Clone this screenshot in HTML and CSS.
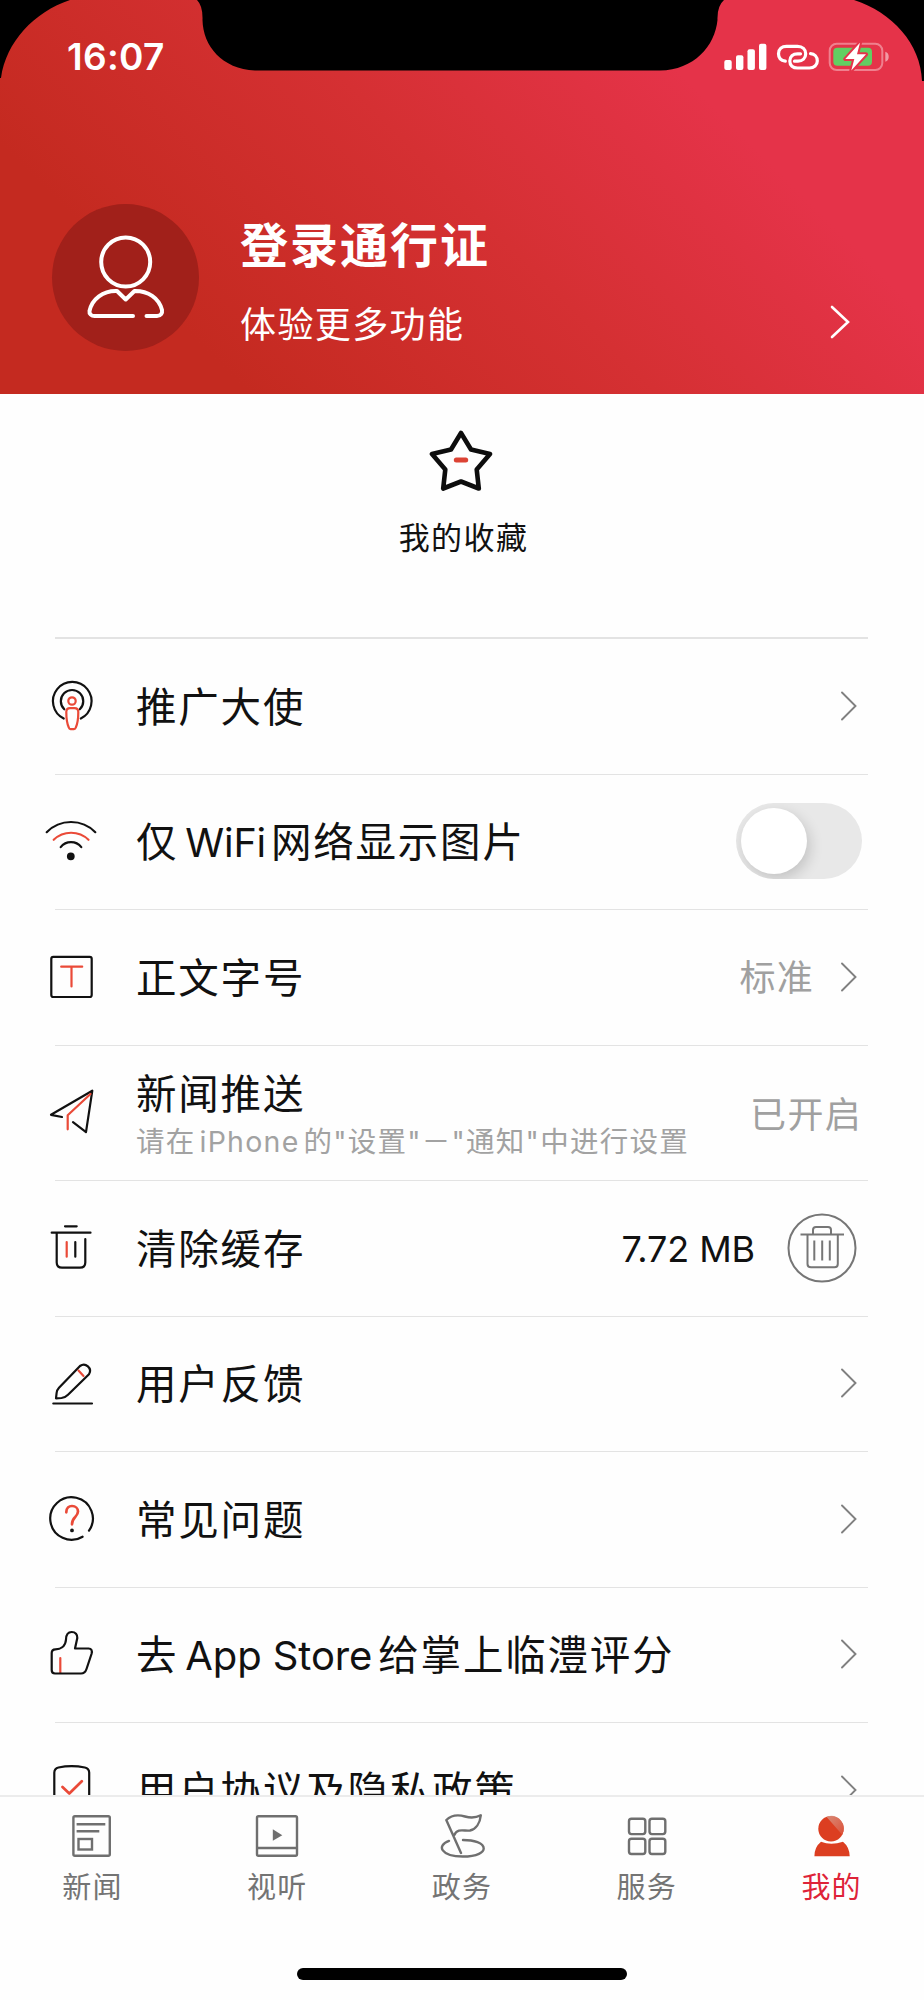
FILE: index.html
```html
<!DOCTYPE html>
<html lang="zh-CN">
<head>
<meta charset="utf-8">
<title>我的</title>
<link rel="stylesheet" href="styles.css">
</head>
<body>
<div class="screen">
  <header class="header">
    <svg class="notch" viewBox="0 0 924 84" aria-hidden="true">
      <path d="M0 0H70C34 12 6 42 1 78H0ZM197 0Q203 6 202.500 20C203 46 222 69 255 70.500H660C694 70 715 46 717.500 20Q717 6 724 0ZM854 0C892 12 921 44 922 81H924V0Z"/>
    </svg>
    <div class="status">
      <span class="clock">16:07</span>
      <svg class="indicators" viewBox="0 0 170 32" width="170" height="32">
        <g fill="#fff">
          <rect x="2.300" y="18" width="7.400" height="10" rx="2"/>
          <rect x="14" y="13.300" width="7.400" height="14.700" rx="2"/>
          <rect x="25.500" y="7.300" width="7.400" height="20.700" rx="2"/>
          <rect x="37" y="1.700" width="7.400" height="26.300" rx="2"/>
        </g>
        <g fill="none" stroke="#fff" stroke-width="3.200" stroke-linecap="round">
          <path d="M63.300 19.200C58.500 18.500 56.500 15.500 56.500 11.800C56.500 7 60 4.300 64.500 4.300H75.500C80.500 4.300 83.700 7.500 83.700 11.800C83.700 16.300 80.500 19.200 76 19.200H72.500"/>
          <path d="M78.500 11.800H75.500C71 11.800 67.800 14.500 67.800 19C67.800 23.500 71 26 75.500 26H87.500C92 26 95.300 23 95.300 19C95.300 14.800 92.500 11.800 88.500 11.600"/>
        </g>
        <rect x="107.700" y="1.700" width="52.600" height="26.300" rx="7" fill="none" stroke="#fff" stroke-opacity=".38" stroke-width="2"/>
        <path d="M163.300 9.800Q166.700 11 166.700 14.800T163.300 19.700Z" fill="#fff" fill-opacity=".5"/>
        <rect x="111.300" y="5.700" width="38.700" height="18" rx="4" fill="#62ce62"/>
        <path d="M138 .7L123.300 17H132.300L129.300 28.500L144 12.300H135Z" fill="#fff" stroke="#e53349" stroke-width="4" paint-order="stroke" stroke-linejoin="round"/>
      </svg>
    </div>
    <div class="profile">
      <div class="avatar">
        <svg viewBox="0 0 148 148" width="148" height="148" fill="none" stroke="#fff" stroke-width="4" stroke-linecap="round" stroke-linejoin="round">
          <circle cx="73.700" cy="58" r="24.500"/>
          <path d="M94.500 112H105C109 112 110.500 109 110 106C107 94 96 86.700 82.500 87L73.700 95.500L65 87C51 86.500 40 95 37.500 107C37 110 39.500 112 42.500 112H81"/>
        </svg>
      </div>
      <div class="login">
        <div class="login-title">登录通行证</div>
        <div class="login-sub">体验更多功能</div>
      </div>
      <svg class="go" viewBox="0 0 20 34" width="20" height="34" fill="none" stroke="#fff" stroke-width="2.600" stroke-linecap="round"><path d="M2 2L18 17L2 32"/></svg>
    </div>
  </header>

  <section class="favorite">
    <svg viewBox="0 0 66 66" width="66" height="66" fill="none" stroke-linecap="round" stroke-linejoin="round">
      <path d="M33 8L43 24.500L62 29L48.700 44.500L50.800 63.500L33 56.500L15.200 63.500L17.300 44.500L4 29L23 24.500Z" stroke="#0d0d0d" stroke-width="4.600"/>
      <path d="M28.300 35H37.700" stroke="#dc4334" stroke-width="5"/>
    </svg>
    <span>我的收藏</span>
  </section>

  <main class="list">
    <div class="row first">
      <svg class="icon" viewBox="0 0 56 56"><path d="M20.700 40.500A19.300 19.300 0 1 1 37.800 40.500M21.300 31.300A11.200 11.200 0 1 1 36.800 31.300"/><g class="red"><circle cx="29" cy="23" r="3.700"/><path d="M23.300 34Q23.300 30.200 27 30.200H31.500Q35.300 30.200 35.300 34Q35.300 44 32.800 49.500Q32.300 51.200 31 51.200H27.500Q26.300 51.200 25.800 49.500Q23.300 44 23.300 34Z"/></g></svg>
      <span class="label">推广大使</span>
      <svg class="chevron" viewBox="0 0 16 30"><path d="M1 1.500L14.500 15L1 28.500"/></svg>
    </div>
    <div class="row">
      <svg class="icon" viewBox="0 0 56 56"><path d="M3.700 19.200A34 34 0 0 1 52.300 19.200M17.700 34.200A13 13 0 0 1 38.300 34.200"/><path class="red" d="M10.700 26.800A25 25 0 0 1 45.500 26.800"/><circle cx="27.800" cy="43.300" r="2.800" fill="#111"/></svg>
      <span class="label">仅<span class="latin">WiFi</span>网络显示图片</span>
      <span class="toggle"><span class="knob"></span></span>
    </div>
    <div class="row">
      <svg class="icon" viewBox="0 0 56 56"><rect x="8.300" y="7.800" width="40.400" height="40.200" rx="2"/><path class="red" d="M18.200 17.700H39.200M28.500 17.700V37.500"/></svg>
      <span class="label">正文字号</span>
      <span class="value">标准</span>
      <svg class="chevron" viewBox="0 0 16 30"><path d="M1 1.500L14.500 15L1 28.500"/></svg>
    </div>
    <div class="row">
      <svg class="icon" viewBox="0 0 56 56"><path d="M19 33L8 30.800L49.300 6.700L43 48.200L30 38.200"/><path class="red" d="M47.500 10L24.700 31.200V45.300"/></svg>
      <div class="stack">
        <span class="label">新闻推送</span>
        <span class="hint">请在<span class="hint-latin">iPhone</span>的"设置"<span class="dash">－</span>"通知"中进行设置</span>
      </div>
      <span class="value last">已开启</span>
    </div>
    <div class="row">
      <svg class="icon" viewBox="0 0 56 56"><path d="M22 6.300H33.700M8.700 12.700H47.500M13.700 12.700V42.500Q13.700 47.700 19 47.700H37Q42.300 47.700 42.300 42.500V19M32.300 22V36.700"/><path class="red" d="M23.700 22V36.700"/></svg>
      <span class="label">清除缓存</span>
      <span class="size">7.72 MB</span>
      <svg class="trash" viewBox="0 0 70 70"><circle cx="35" cy="35" r="33.500"/><path d="M13.500 21.500H57M26 21.500V17Q26 14 29 14H41Q44 14 44 17V21.500M20.500 21.500V51Q20.500 54.300 24 54.300H47.500Q50.800 54.300 50.800 51V21.500M27.300 27.500V47.500M35.200 27.500V47.500M42.800 27.500V47.500"/></svg>
    </div>
    <div class="row">
      <svg class="icon" viewBox="0 0 56 56"><path d="M10.300 48.500H49M13 43.300L13.600 38Q14 34.800 16 32.700L37 11A6.200 6.200 0 0 1 46 19.200L25 39.700Q22 42.700 18.500 43Z"/><path class="red" d="M35.500 15.500L40.500 21"/></svg>
      <span class="label">用户反馈</span>
      <svg class="chevron" viewBox="0 0 16 30"><path d="M1 1.500L14.500 15L1 28.500"/></svg>
    </div>
    <div class="row">
      <svg class="icon" viewBox="0 0 56 56"><path d="M39.600 45.700A21.300 21.300 0 1 1 46 39.700"/><path class="red thick" d="M23.300 21.300C23.300 17 26 15 29 15C32.500 15 35 17.500 35 20.500C35 23 33.500 24.500 32 26.200C30 28.300 29 29.500 29 33.300"/><circle cx="29" cy="39.400" r=".8" fill="#111"/></svg>
      <span class="label">常见问题</span>
      <svg class="chevron" viewBox="0 0 16 30"><path d="M1 1.500L14.500 15L1 28.500"/></svg>
    </div>
    <div class="row">
      <svg class="icon" viewBox="0 0 56 56"><path class="red" d="M17.300 32V47"/><path d="M12 47.500Q8.700 47.500 8.700 44V27Q8.700 23.300 12.500 23.300C17 23.300 22.500 21 23 13.500C23.100 8.500 25 6 28.700 6C32.500 6 34.500 8.500 34.300 12L32 22.500H45.500Q50 22.800 48.500 28L43.500 43Q42 47.500 38 47.500Z"/></svg>
      <span class="label">去<span class="latin app">App Store</span>给掌上临澧评分</span>
      <svg class="chevron" viewBox="0 0 16 30"><path d="M1 1.500L14.500 15L1 28.500"/></svg>
    </div>
    <div class="row">
      <svg class="icon" viewBox="0 0 56 56"><path d="M11.300 40V10.500Q11.500 6.500 15.500 5.500Q28.500 2.700 41.800 5.500Q46 6.500 46.200 10.500V40Q42 47 28.700 51Q15 47 11.300 40Z"/><path class="red thick" d="M19.500 25L26.300 31.500L38.800 19.300"/></svg>
      <span class="label">用户协议及隐私政策</span>
      <svg class="chevron" viewBox="0 0 16 30"><path d="M1 1.500L14.500 15L1 28.500"/></svg>
    </div>
  </main>

  <nav class="tabs">
    <div class="tab">
      <svg viewBox="0 0 48 48"><rect x="5.400" y="4.300" width="36.400" height="39.500" rx="1.500"/><path d="M8.600 12.300H37.300M8.600 19.300H31.300"/><rect x="10.500" y="27" width="13.500" height="10.500"/></svg>
      <span>新闻</span>
    </div>
    <div class="tab">
      <svg viewBox="0 0 48 48"><rect x="4" y="4.300" width="40" height="39.500" rx="1.500"/><path d="M4 36H44"/><path d="M19.800 17.300L29.300 23.200L19.800 28.800Z" fill="#6f6f6f" stroke="none"/></svg>
      <span>视听</span>
    </div>
    <div class="tab">
      <svg viewBox="0 0 48 48" stroke-linecap="round" stroke-linejoin="round"><path d="M23 41L8.300 8C13 3.500 20 2.500 27 4.500C33 6.200 38 5.800 42.800 3.300C42 11 38 17 32 18.500C27 19.500 19.500 15.500 16.300 23M11 28.900C-2 33.500 3 44.500 24.700 44.500C40 44.500 45.700 40 45.700 36.500C45.700 31 36 28 25 28"/></svg>
      <span>政务</span>
    </div>
    <div class="tab">
      <svg viewBox="0 0 48 48"><rect x="6" y="6.800" width="16.300" height="15.300" rx="2.500"/><rect x="26.500" y="6.800" width="15.800" height="15.300" rx="2.500"/><rect x="6" y="26.700" width="16.300" height="15.300" rx="2.500"/><rect x="26.500" y="26.700" width="15.800" height="15.300" rx="2.500"/></svg>
      <span>服务</span>
    </div>
    <div class="tab active">
      <svg viewBox="0 0 48 48" stroke="none">
        <defs><linearGradient id="shine" x1="0" y1="0" x2="1" y2="1"><stop offset="0" stop-color="#d8a090" stop-opacity=".75"/><stop offset="1" stop-color="#dc5038" stop-opacity=".9"/></linearGradient></defs>
        <circle cx="23" cy="16.700" r="12.700" fill="#dc3e21"/>
        <path d="M18.500 4.800A12.700 12.700 0 0 1 34.200 22.700Z" fill="url(#shine)"/>
        <path d="M6.400 44.200Q6.400 35 13 29.700Q23 33.800 35 29.700Q41.500 35 41.700 44.200Z" fill="#dc3e21"/>
      </svg>
      <span>我的</span>
    </div>
  </nav>
  <div class="home-area"><div class="home-bar"></div></div>
</div>
</body>
</html>
```
FILE: styles.css
```css
* { box-sizing: border-box; }
body {
  margin: 0;
  background: #fff;
  font-family: Inter, "Noto Sans CJK SC", sans-serif;
  color: #111;
}
.screen {
  width: 924px;
  height: 2000px;
  display: flex;
  flex-direction: column;
  overflow: hidden;
  background: #fefefe;
}
svg { display: block; flex: none; }

.header {
  position: relative;
  flex: none;
  height: 394px;
  background: linear-gradient(45deg, #c42a20 19%, #d53033 50%, #e53349 76%);
  color: #fff;
}
.notch { position: absolute; left: 0; top: 0; width: 924px; height: 84px; }
.status {
  display: flex;
  justify-content: space-between;
  align-items: center;
  height: 116px;
  padding: 0 32px 0 67px;
}
.clock { font-size: 37px; font-weight: 600; letter-spacing: .3px; line-height: 44px; margin-top: -2px; }
.profile {
  display: flex;
  align-items: flex-start;
  padding: 88px 74px 0 52px;
}
.avatar { width: 147px; height: 147px; border-radius: 50%; background: #a1201a; }
.login { margin-left: 41px; flex: 1; }
.login-title { font-size: 48px; line-height: 60px; font-weight: 600; letter-spacing: 2px; margin-top: 12px; }
.login-sub { font-size: 36px; line-height: 50px; font-weight: 400; letter-spacing: 1.400px; margin-top: 24px; }
.go { margin-top: 101px; }

.favorite {
  flex: none;
  height: 243px;
  padding-top: 31px;
  display: flex;
  flex-direction: column;
  align-items: center;
}
.favorite svg { margin-right: 2px; }
.favorite span { margin-top: 24px; padding-left: 3px; font-size: 31px; line-height: 46px; letter-spacing: 1.400px; }

.list { flex: none; height: 1158px; padding: 1px 56px 0 43px; overflow: hidden; }
.row {
  position: relative;
  display: flex;
  align-items: center;
  height: 135.500px;
  padding-right: 11px;
}
.row::before {
  content: "";
  position: absolute;
  left: 12px; right: 0; top: 0;
  height: 1px;
  background: #e3e3e3;
}
.row.first::before { height: 2px; top: -1px; }
.icon {
  width: 56px; height: 56px;
  margin-right: 37px;
  fill: none; stroke: #111; stroke-width: 2.200;
  stroke-linecap: round; stroke-linejoin: round;
}
.icon .red { stroke: #ea4a38; }
.icon .thick { stroke-width: 2.700; }
.label { flex: 1; font-size: 40.500px; line-height: 52px; letter-spacing: 1.800px; white-space: nowrap; padding-top: 4px; }
.latin { font-size: 39.500px; letter-spacing: -.2px; margin: 0 5px 0 7px; }
.latin.app { font-size: 40px; letter-spacing: -.1px; margin: 0 6px 0 7px; }
.chevron { width: 16px; height: 30px; fill: none; stroke: #808080; stroke-width: 1.900; stroke-linecap: round; }
.toggle {
  width: 126px; height: 76px;
  margin-right: -5px;
  border-radius: 38px;
  background: #e8e8e8;
  padding: 5px;
  overflow: hidden;
}
.knob { display: block; width: 66px; height: 66px; border-radius: 50%; background: #fff; box-shadow: 3px 5px 14px rgba(0,0,0,.16); }
.value { font-size: 36px; line-height: 48px; letter-spacing: 1.300px; color: #a0a0a0; margin: 2px 27px 0 0; }
.value.last { margin: 5px -5px 0 0; }
.stack { flex: 1; display: flex; flex-direction: column; padding-top: 4px; }
.stack .label { flex: none; line-height: 50px; }
.hint { font-size: 28.500px; line-height: 40px; letter-spacing: 1.250px; color: #a2a2a2; margin-top: 2px; white-space: nowrap; }
.hint-latin { margin: 0 4px; }
.size { font-size: 36px; letter-spacing: -.1px; margin: 3px 32px 0 0; }
.trash { width: 70px; height: 70px; fill: none; stroke: #767676; stroke-width: 2; }

.tabs {
  flex: none;
  display: grid;
  grid-template-columns: repeat(5, 1fr);
  height: 129px;
  border-top: 2px solid #ececec;
  padding-top: 15px;
}
.tab { display: flex; flex-direction: column; align-items: center; color: #747474; font-size: 29px; }
.tab svg { width: 48px; height: 48px; fill: none; stroke: #6f6f6f; stroke-width: 2.400; }
.tab span { line-height: 40px; margin-top: 8px; letter-spacing: 1.200px; }
.tab.active { color: #de2338; }
.tab.active svg { stroke: none; }

.home-area { flex: 1; display: flex; justify-content: center; align-items: flex-start; padding-top: 44px; }
.home-bar { width: 330px; height: 12px; border-radius: 6px; background: #000; }
```
